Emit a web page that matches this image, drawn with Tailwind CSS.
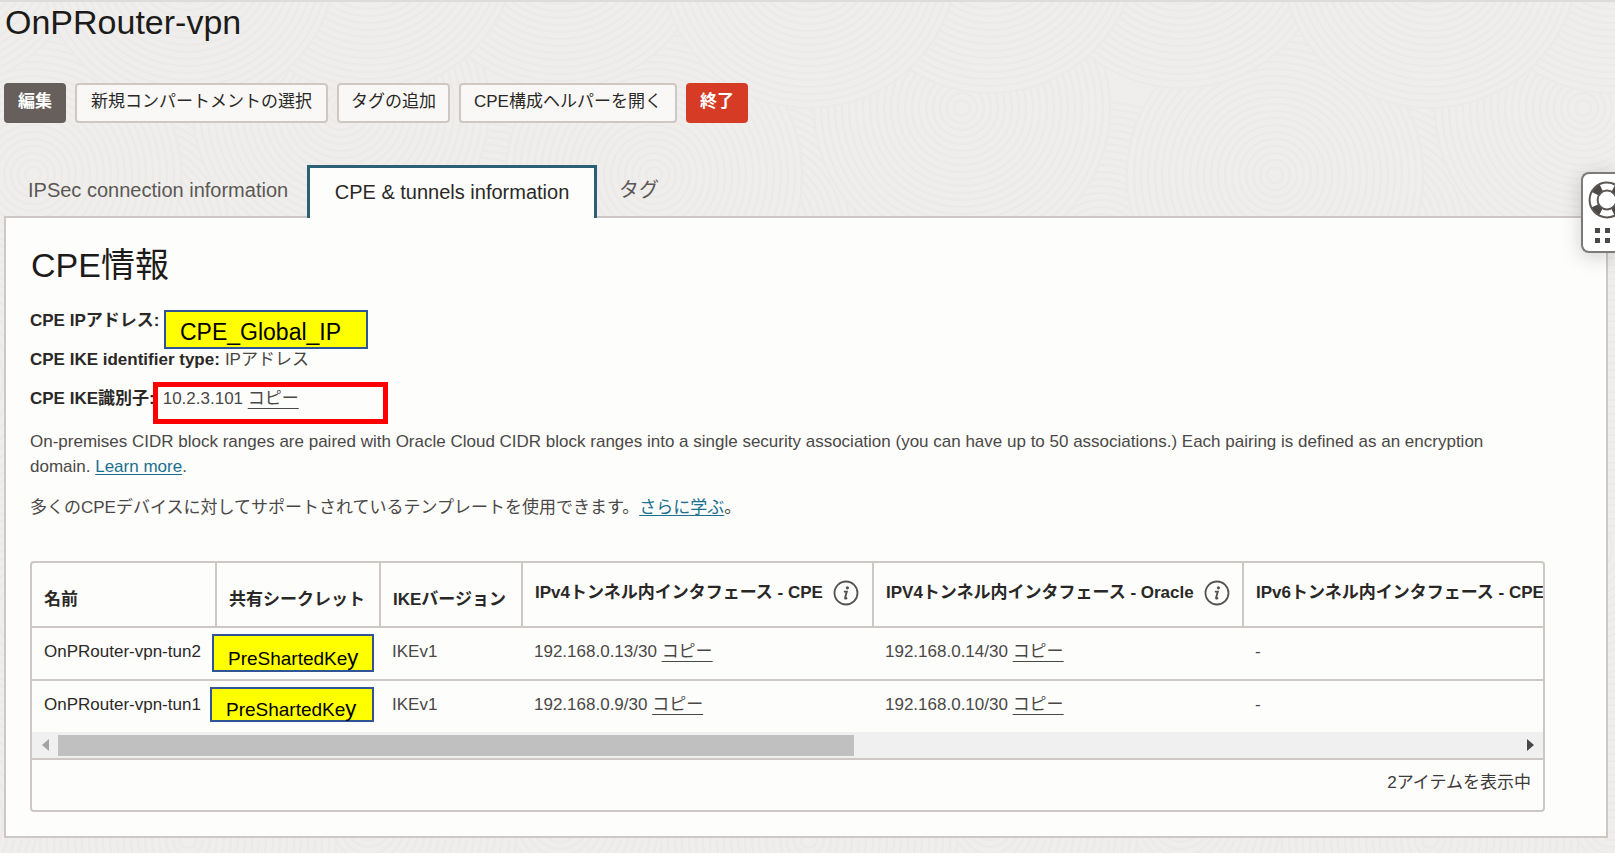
<!DOCTYPE html>
<html lang="ja">
<head>
<meta charset="utf-8">
<title>OnPRouter-vpn</title>
<script src="https://cdn.jsdelivr.net/npm/@tailwindcss/browser@4"></script>
</head>
<body class="relative isolate min-h-screen bg-[#efeeec] font-['Liberation_Sans','Noto_Sans_CJK_JP',sans-serif] text-[17px] leading-[25px] text-[#4a4846] overflow-x-hidden">

<!-- Wave texture behind the page -->
<svg class="absolute inset-0 -z-10 h-full w-full" aria-hidden="true">
  <defs>
    <g id="rings" fill="none" stroke="#ebeae8" stroke-width="2">
      <circle r="148" fill="#efeeec"/><circle r="141"/><circle r="134"/><circle r="127"/><circle r="120"/><circle r="113"/><circle r="106"/><circle r="99"/><circle r="92"/><circle r="85"/><circle r="78"/><circle r="71"/><circle r="64"/><circle r="57"/><circle r="50"/><circle r="43"/><circle r="36"/><circle r="29"/><circle r="22"/><circle r="15"/><circle r="8"/>
    </g>
    <pattern id="waves" width="621" height="440" patternUnits="userSpaceOnUse">
      <use href="#rings" x="130" y="230"/><use href="#rings" x="480" y="250"/>
      <use href="#rings" x="341" y="108"/>
      <use href="#rings" x="33" y="175"/><use href="#rings" x="654" y="175"/>
      <use href="#rings" x="560" y="-60"/><use href="#rings" x="-61" y="-60"/>
      <use href="#rings" x="369" y="-55"/>
      <use href="#rings" x="188" y="-40"/>
      <use href="#rings" x="560" y="380"/><use href="#rings" x="-61" y="380"/>
      <use href="#rings" x="369" y="385"/>
      <use href="#rings" x="188" y="400"/>
    </pattern>
  </defs>
  <rect width="100%" height="100%" fill="url(#waves)"/>
</svg>

<main class="border-t-2 border-[#dddcda] pr-[7px] pl-1 pb-4">
  <h1 class="pl-px text-[34px] leading-10 text-[#1d1b19]">OnPRouter-vpn</h1>

  <div class="mt-[41px] flex gap-[9px] text-[#2a2826]">
    <button class="h-10 rounded-[4px] bg-[#665f5b] px-[14px] pb-1 font-bold text-white">編集</button>
    <button class="h-10 rounded-[4px] border-2 border-[#cdc8c3] bg-[#f9f8f6] px-[14px] pb-1">新規コンパートメントの選択</button>
    <button class="h-10 rounded-[4px] border-2 border-[#cdc8c3] bg-[#f9f8f6] px-3 pb-1">タグの追加</button>
    <button class="h-10 rounded-[4px] border-2 border-[#cdc8c3] bg-[#f9f8f6] px-[13px] pb-1">CPE構成ヘルパーを開く</button>
    <button class="h-10 rounded-[4px] bg-[#d63b25] px-[14px] pb-1 font-bold text-white">終了</button>
  </div>

  <nav class="relative z-10 mt-[42px] -mb-[2px] flex h-[53px] text-[20px] text-[#5b5856]" role="tablist">
    <button role="tab" class="w-[303px] px-6 pb-[2px] text-left whitespace-nowrap">IPSec connection information</button>
    <button role="tab" aria-selected="true" class="w-[290px] border-x-3 border-t-3 border-[#2b6075] bg-[#fdfdfc] pb-[2px] whitespace-nowrap text-[#2a2826]">CPE &amp; tunnels information</button>
    <button role="tab" class="px-[22px] pb-[2px] text-left">タグ</button>
  </nav>

  <section class="border-2 border-[#cdc8c5] bg-[#fdfdfc] pt-[22px] pr-[61px] pb-6 pl-6">
    <h2 class="pl-px text-[34px] leading-[50px] text-[#1d1b19]">CPE情報</h2>

    <dl class="mt-[18px] flex flex-col gap-[14px]">
      <div class="relative flex gap-[5px]">
        <dt class="font-bold text-[#2a2826]">CPE IPアドレス:</dt>
        <dd class="absolute top-[2px] left-[134px] h-[39px] w-[204px] border-2 border-[#2f5597] bg-[#ffff00] pl-[14px] text-[23px] leading-[40px] text-black">CPE_Global_IP</dd>
      </div>
      <div class="flex gap-[5px]">
        <dt class="font-bold text-[#2a2826]">CPE IKE identifier type:</dt>
        <dd>IPアドレス</dd>
      </div>
      <div class="relative flex gap-[5px]">
        <dt class="font-bold text-[#2a2826]">CPE IKE識別子:</dt>
        <dd class="pl-[3px]">10.2.3.101 <a href="#" class="underline underline-offset-4">コピー</a></dd>
        <div class="absolute -top-[4px] left-[123px] h-[42px] w-[235px] border-5 border-[#ff0000]"></div>
      </div>
    </dl>

    <p class="mt-[18px]">On-premises CIDR block ranges are paired with Oracle Cloud CIDR block ranges into a single security association (you can have up to 50 associations.) Each pairing is defined as an encryption domain. <a href="#" class="text-[#1b6f8f] underline underline-offset-2">Learn more</a>.</p>
    <p class="mt-4">多くのCPEデバイスに対してサポートされているテンプレートを使用できます。<a href="#" class="text-[#1b6f8f] underline underline-offset-2">さらに学ぶ</a>。</p>

    <div class="mt-[41px] overflow-hidden rounded-[4px] border-2 border-[#cdc8c5]">
      <div class="overflow-hidden">
        <table class="w-[1581px] table-fixed border-collapse text-left whitespace-nowrap">
          <colgroup><col class="w-[184px]"><col class="w-[164px]"><col class="w-[142px]"><col class="w-[351px]"><col class="w-[370px]"><col class="w-[370px]"></colgroup>
          <thead class="text-[#2a2826]">
            <tr class="h-16 border-b-2 border-[#cdc8c5]">
              <th scope="col" class="border-r-2 border-[#cdc8c5] px-3 pt-[10px]">名前</th>
              <th scope="col" class="border-r-2 border-[#cdc8c5] px-3 pt-[10px]">共有シークレット</th>
              <th scope="col" class="border-r-2 border-[#cdc8c5] px-3 pt-[10px]">IKEバージョン</th>
              <th scope="col" class="border-r-2 border-[#cdc8c5] px-3 pb-1"><span class="flex items-center gap-[10px]">IPv4トンネル内インタフェース - CPE
                <svg class="size-[26px]" viewBox="0 0 26 26" fill="none" aria-hidden="true"><circle cx="13" cy="13" r="11.5" stroke="#55524f" stroke-width="1.8"/><circle cx="14.4" cy="7.8" r="1.6" fill="#55524f"/><path d="M10.8 11.6h3l-1.7 6.2q-.2 1 .8.7l1.3-.6" stroke="#55524f" stroke-width="1.9"/></svg></span></th>
              <th scope="col" class="border-r-2 border-[#cdc8c5] px-3 pb-1"><span class="flex items-center gap-[10px]">IPV4トンネル内インタフェース - Oracle
                <svg class="size-[26px]" viewBox="0 0 26 26" fill="none" aria-hidden="true"><circle cx="13" cy="13" r="11.5" stroke="#55524f" stroke-width="1.8"/><circle cx="14.4" cy="7.8" r="1.6" fill="#55524f"/><path d="M10.8 11.6h3l-1.7 6.2q-.2 1 .8.7l1.3-.6" stroke="#55524f" stroke-width="1.9"/></svg></span></th>
              <th scope="col" class="px-3 pb-1">IPv6トンネル内インタフェース - CPE</th>
            </tr>
          </thead>
          <tbody>
            <tr class="h-[53px] border-b-2 border-[#cdc8c5]">
              <td class="px-3 pb-1 text-[#2a2826]">OnPRouter-vpn-tun2</td>
              <td class="relative"><span class="absolute top-[6px] -left-[4px] h-[38px] w-[162px] border-2 border-[#2f5597] bg-[#ffff00] pl-[14px] text-[19px] leading-[46px] text-black">PreShartedKe<span class="text-[22px] leading-none">y</span></span></td>
              <td class="px-3 pb-1">IKEv1</td>
              <td class="px-3 pb-1">192.168.0.13/30 <a href="#" class="underline underline-offset-4">コピー</a></td>
              <td class="px-3 pb-1">192.168.0.14/30 <a href="#" class="underline underline-offset-4">コピー</a></td>
              <td class="px-3 pb-1">-</td>
            </tr>
            <tr class="h-[52px]">
              <td class="px-3 pb-1 text-[#2a2826]">OnPRouter-vpn-tun1</td>
              <td class="relative"><span class="absolute top-[6px] -left-[6px] h-[35px] w-[164px] border-2 border-[#2f5597] bg-[#ffff00] pl-[14px] text-[19px] leading-[42px] text-black">PreShartedKe<span class="text-[22px] leading-none">y</span></span></td>
              <td class="px-3 pb-1">IKEv1</td>
              <td class="px-3 pb-1">192.168.0.9/30 <a href="#" class="underline underline-offset-4">コピー</a></td>
              <td class="px-3 pb-1">192.168.0.10/30 <a href="#" class="underline underline-offset-4">コピー</a></td>
              <td class="px-3 pb-1">-</td>
            </tr>
          </tbody>
        </table>
      </div>
      <!-- Horizontal scrollbar -->
      <div class="flex h-[26px] items-center bg-[#f0f0f0]">
        <button aria-label="左へスクロール" class="flex w-[26px] justify-center"><svg class="h-3 w-[7px]" viewBox="0 0 7 12"><path d="M7 0v12L0 6z" fill="#a3a3a3"/></svg></button>
        <div class="flex-1"><div class="h-[21px] w-6/11 bg-[#c0c0c0]"></div></div>
        <button aria-label="右へスクロール" class="flex w-[25px] justify-center"><svg class="h-3 w-[7px]" viewBox="0 0 7 12"><path d="M0 0v12l7-6z" fill="#484848"/></svg></button>
      </div>
      <div class="h-[52px] border-t-2 border-[#cdc8c5] px-3 pt-[10px] text-right text-[#3d3b39]">2アイテムを表示中</div>
    </div>
  </section>
</main>

<!-- Help widget docked to the window edge -->
<button aria-label="ヘルプ" class="absolute top-[172px] right-0 z-20 h-[81px] w-[34px] overflow-hidden rounded-l-lg border-2 border-r-0 border-[#7d7b79] bg-white shadow-[0_4px_20px_rgba(0,0,0,0.18)]">
  <svg class="h-[77px] w-[50px]" viewBox="0 0 50 77" fill="none" aria-hidden="true">
    <circle cx="24" cy="26" r="13.2" stroke="#4b4845" stroke-width="8.5" stroke-dasharray="8.4 12.33" stroke-dashoffset="-6.16"/>
    <circle cx="24" cy="26" r="17.4" stroke="#5a5754" stroke-width="2"/>
    <circle cx="24" cy="26" r="9.4" stroke="#5a5754" stroke-width="2"/>
    <path d="M12 54h5v5h-5zM22 54h5v5h-5zM32 54h5v5h-5zM12 64h5v5h-5zM22 64h5v5h-5zM32 64h5v5h-5z" fill="#4b4845"/>
  </svg>
</button>
</body>
</html>
